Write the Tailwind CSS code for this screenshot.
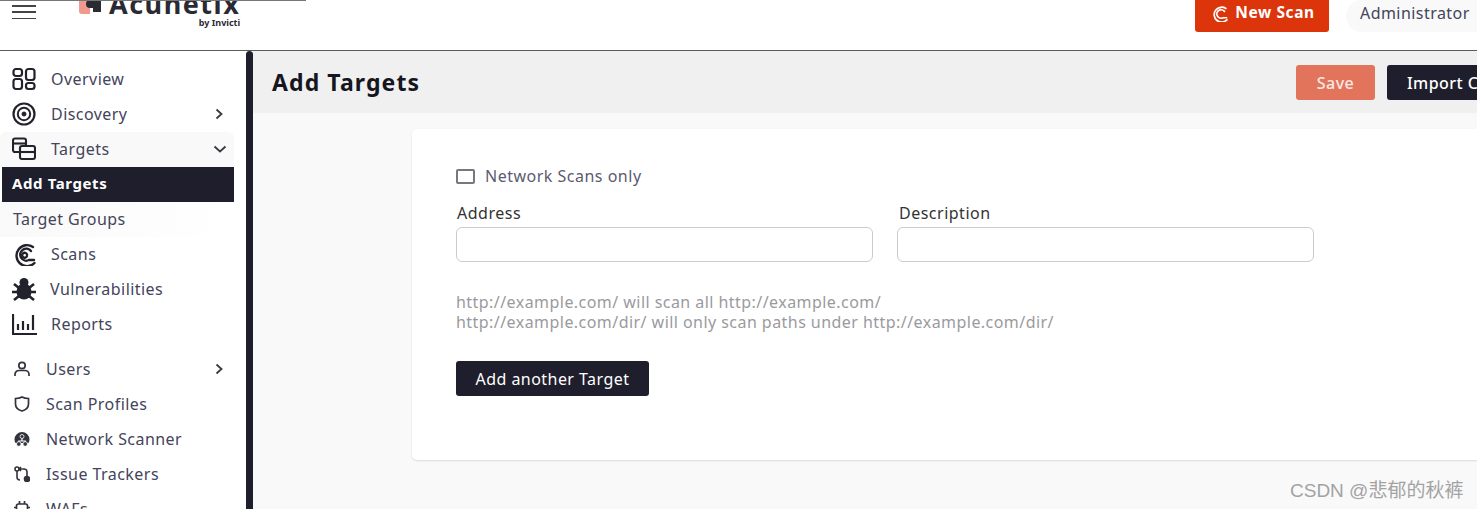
<!DOCTYPE html>
<html lang="en">
<head>
  <meta charset="UTF-8" />
  <meta name="viewport" content="width=device-width, initial-scale=1.0"/>
  <title>Add Targets</title>
  <script src="https://cdn.jsdelivr.net/npm/@tailwindcss/browser@4"></script>
</head>
<body class="bg-white font-['Noto_Sans',sans-serif] w-[1477px] h-[509px] overflow-hidden relative">
  <!-- Top bar -->
  <div class="h-[51px] border-b-[1.5px] border-[#5c5c5c] bg-white flex items-start overflow-hidden relative">
    <div class="absolute top-0 left-0 w-[306px] h-px bg-[#777]"></div>
    <button class="ml-[12px] mt-[5px] w-[24px] h-[14px] flex flex-col justify-between">
      <span class="block h-[1.5px] w-full bg-[#444]"></span>
      <span class="block h-[1.5px] w-full bg-[#444]"></span>
      <span class="block h-[1.5px] w-full bg-[#444]"></span>
    </button>
    <div class="ml-[42px] -mt-[13px] flex items-start">
      <svg class="w-[24px] h-[24px] mt-[5px]" viewBox="0 0 24 24">
        <path d="M1 5h11v17H4a3 3 0 0 1-3-3z" fill="#ef9a8c"/>
        <path d="M8 5h12a3 3 0 0 1 3 3v12h-8v-4h-3a4 4 0 0 1 0-8H8z" fill="#2b2b33"/>
      </svg>
      <div class="ml-[7px] flex flex-col items-end">
        <span class="text-[27px] leading-[33px] font-bold text-[#2a2a33] tracking-[1.5px]">Acunetix</span>
        <span class="text-[9px] leading-[10px] font-bold text-[#2a2a33] mt-[-2px]">by Invicti</span>
      </div>
    </div>
    <div class="ml-auto flex items-start">
      <a class="w-[134px] h-[32px] pb-[6px] pl-[2px] bg-[#dc340b] rounded-b-[3px] text-white font-bold text-[15.5px] tracking-[0.6px] flex items-center justify-center gap-[7px]">
        <svg class="w-[17px] h-[17px]" viewBox="0 0 24 24" fill="none" stroke="white" stroke-width="2.4" stroke-linecap="round">
          <path d="M21 5A10.500 10.500 0 1 0 22.500 21"/>
          <path d="M19 9A6 6 0 1 0 17 18L22 18"/>
        </svg>
        New Scan
      </a>
      <div class="ml-[17px] w-[131px] h-[32px] pb-[6px] bg-[#f9f9f9] rounded-l-full pl-[14px] flex items-center text-[16px] tracking-[0.45px] text-[#44445a] whitespace-nowrap">Administrator</div>
    </div>
  </div>

  <div class="flex h-[458px]">
    <!-- Sidebar -->
    <aside class="w-[246px] shrink-0 pt-[11px] text-[16px] tracking-[0.45px] text-[#44445a] overflow-hidden">
      <nav class="w-[234px]">
        <a class="h-[35px] pb-[2px] flex items-center pl-[12px]">
          <svg class="w-[24px] h-[24px] mr-[15px]" viewBox="0 0 24 24" fill="none" stroke="#22222c" stroke-width="2.2">
            <rect x="1.500" y="2" width="8.500" height="7" rx="2.500"/><rect x="14" y="2" width="8.500" height="11" rx="2.500"/>
            <rect x="1.500" y="12" width="8.500" height="10" rx="2.500"/><rect x="14" y="16" width="8.500" height="6" rx="2.500"/>
          </svg>Overview</a>
        <a class="h-[35px] pb-[2px] flex items-center pl-[12px]">
          <svg class="w-[24px] h-[24px] mr-[15px]" viewBox="0 0 24 24" fill="none" stroke="#22222c">
            <circle cx="12" cy="12" r="10.500" stroke-width="2.200"/><circle cx="12" cy="12" r="6.200" stroke-width="2"/><circle cx="12" cy="12" r="2" fill="#22222c" stroke-width="1"/>
          </svg>Discovery
          <svg class="w-[10px] h-[12px] ml-auto mr-[10px]" viewBox="0 0 10 12" fill="none" stroke="#3a3a44" stroke-width="1.800"><path d="M2.500 1.500 7.500 6l-5 4.500"/></svg></a>
        <a class="h-[35px] pb-[2px] flex items-center pl-[12px] bg-[#f9f9f9] rounded-t-[6px]">
          <svg class="w-[24px] h-[24px] mr-[15px]" viewBox="0 0 24 24" fill="none" stroke="#22222c" stroke-width="2.100">
            <path d="M7 15H3a2 2 0 0 1-2-2V3.500a2 2 0 0 1 2-2h9a2 2 0 0 1 2 2V8"/><path d="M1 6.500h13"/>
            <rect x="8" y="9" width="15" height="13" rx="2"/><path d="M8 15h15"/>
          </svg>Targets
          <svg class="w-[14px] h-[10px] ml-auto mr-[7px]" viewBox="0 0 14 10" fill="none" stroke="#3a3a44" stroke-width="1.800"><path d="M1.500 2.500 7 7.500l5.500-5"/></svg></a>
        <a class="h-[35px] pb-[2px] ml-[2px] flex items-center pl-[10px] bg-[#1e1e2c] text-white font-bold text-[15px] tracking-[0.6px]">Add Targets</a>
        <a class="h-[35px] pb-[2px] flex items-center pl-[13px] bg-gradient-to-r from-[#f9f9f9] to-white">Target Groups</a>
        <a class="h-[35px] pb-[2px] flex items-center pl-[12px]">
          <svg class="w-[24px] h-[24px] mr-[15px]" viewBox="0 0 24 24" fill="none" stroke="#22222c" stroke-width="2.400" stroke-linecap="round">
            <path d="M21 5A10.500 10.500 0 1 0 22.500 21"/>
            <path d="M19 9A6 6 0 1 0 17 18L22 18"/>
            <path d="M15 12.500A2.500 2.500 0 1 0 15 14"/>
          </svg>Scans</a>
        <a class="h-[35px] pb-[2px] flex items-center pl-[12px]">
          <svg class="w-[24px] h-[24px] mr-[14px]" viewBox="0 0 24 24" fill="#22222c" stroke="#22222c">
            <ellipse cx="12" cy="14.500" rx="7.500" ry="8" stroke="none"/><circle cx="12" cy="5.500" r="4.500" stroke="none"/>
            <path d="M2 7l5 4M22 7l-5 4M0 15h6M24 15h-6M2 23l5-4M22 23l-5-4" stroke-width="2.600" fill="none"/>
          </svg>Vulnerabilities</a>
        <a class="h-[35px] pb-[2px] flex items-center pl-[12px]">
          <svg class="w-[25px] h-[24px] mr-[14px]" viewBox="0 0 25 24" fill="none" stroke="#22222c" stroke-width="2.200">
            <path d="M1 2v20h24"/><path d="M6 18v-6M11 18v-9M16 18v-6M21 18V3"/>
          </svg>Reports</a>
        <a class="h-[35px] pb-[2px] mt-[10px] flex items-center pl-[14px]">
          <svg class="w-[16px] h-[16px] mr-[16px]" viewBox="0 0 16 16" fill="none" stroke="#33333d" stroke-width="1.700">
            <circle cx="8" cy="4.500" r="3.200"/><path d="M1 15v-1.500a4 4 0 0 1 4-4h6a4 4 0 0 1 4 4V15"/>
          </svg>Users
          <svg class="w-[10px] h-[12px] ml-auto mr-[10px]" viewBox="0 0 10 12" fill="none" stroke="#3a3a44" stroke-width="1.800"><path d="M2.500 1.500 7.500 6l-5 4.500"/></svg></a>
        <a class="h-[35px] pb-[2px] flex items-center pl-[14px]">
          <svg class="w-[16px] h-[16px] mr-[16px]" viewBox="0 0 16 16" fill="none" stroke="#33333d" stroke-width="1.700">
            <path d="M8 1c2 1.200 4 1.500 6.500 1.500V8c0 3.500-3 6-6.500 7C4.500 14 1.500 11.500 1.500 8V2.500C4 2.500 6 2.200 8 1z"/>
          </svg>Scan Profiles</a>
        <a class="h-[35px] pb-[2px] flex items-center pl-[14px]">
          <svg class="w-[16px] h-[16px] mr-[16px]" viewBox="0 0 16 16">
            <path d="M8 1A7.500 7.500 0 0 0 .5 8.500c0 1.300.3 2.500 1 3.500h13c.7-1 1-2.200 1-3.500A7.500 7.500 0 0 0 8 1z" fill="#33333d"/>
            <path d="M8 6v4M4.800 12.500V10h6.400v2.500" fill="none" stroke="white" stroke-width="1.200"/>
            <circle cx="8" cy="5.500" r="2" fill="#33333d" stroke="white" stroke-width=".8"/>
            <circle cx="4.800" cy="13" r="2.300" fill="#33333d" stroke="white" stroke-width=".8"/>
            <circle cx="11.200" cy="13" r="2.300" fill="#33333d" stroke="white" stroke-width=".8"/>
          </svg>Network Scanner</a>
        <a class="h-[35px] pb-[2px] flex items-center pl-[14px]">
          <svg class="w-[16px] h-[16px] mr-[16px]" viewBox="0 0 16 16" fill="none" stroke="#33333d" stroke-width="1.600">
            <circle cx="3" cy="3" r="2"/><path d="M3 5v6a3 3 0 0 0 3 3"/><path d="M7 1 5 3l2 2M5.500 3H10a3 3 0 0 1 3 3v5"/><circle cx="13" cy="13" r="2.500" fill="#33333d"/>
          </svg>Issue Trackers</a>
        <a class="h-[35px] pb-[2px] flex items-center pl-[14px]">
          <svg class="w-[16px] h-[16px] mr-[16px]" viewBox="0 0 16 16" fill="none" stroke="#33333d" stroke-width="1.700">
            <rect x="2.500" y="3" width="11" height="11" rx="2"/><path d="M5.500 3V0M10.500 3V0M0 6.500h2.500M13.500 6.500H16"/>
          </svg>WAFs</a>
      </nav>
    </aside>
    <div class="w-[7px] shrink-0 bg-[#1e1e2c] rounded-t-[4px]"></div>

    <!-- Main -->
    <main class="flex-1 min-w-0 bg-[#f9f9f9] overflow-hidden">
      <div class="h-[62px] bg-[#f0f0f0] flex items-center pl-[19px] pt-[1px]">
        <h1 class="text-[23px] font-bold tracking-[1.1px] text-[#16161e]">Add Targets</h1>
        <button class="ml-auto w-[79px] h-[35px] rounded-[3px] bg-[#e3745c] text-[#fbe9e4] text-[16px] tracking-[0.45px] font-medium">Save</button>
        <button class="ml-[12px] -mr-[50px] w-[140px] h-[35px] rounded-[3px] bg-[#1e1e2c] text-white text-[16px] tracking-[0.45px] font-medium text-left pl-[20px] whitespace-nowrap">Import CSV</button>
      </div>
      <div class="ml-[159px] mt-[16px] h-[331px] -mr-[20px] bg-white rounded-[5px] shadow-[0_1px_2px_rgba(0,0,0,0.12)] pl-[44px] pt-[38px]">
        <label class="flex items-center h-[18px] text-[16px] tracking-[0.5px] text-[#5a5a70]">
          <span class="w-[19px] h-[15px] border-2 border-[#77777f] rounded-[2px] mr-[10px]"></span>
          Network Scans only
        </label>
        <div class="flex gap-[24px] mt-[18px]">
          <div class="w-[417px]">
            <div class="text-[16px] leading-[20px] text-[#333] pl-px tracking-[0.5px]">Address</div>
            <input class="block mt-[4px] w-full h-[35px] bg-white border border-[#ccc] rounded-[6px]" />
          </div>
          <div class="w-[417px]">
            <div class="text-[16px] leading-[20px] text-[#333] pl-[2px] tracking-[0.5px]">Description</div>
            <input class="block mt-[4px] w-full h-[35px] bg-white border border-[#ccc] rounded-[6px]" />
          </div>
        </div>
        <p class="mt-[31px] text-[16px] leading-[19.500px] tracking-[0.45px] text-[#9a9a9e] whitespace-nowrap">http://example.com/ will scan all http://example.com/<br>http://example.com/dir/ will only scan paths under http://example.com/dir/</p>
        <button class="mt-[29px] w-[193px] h-[35px] rounded-[3px] bg-[#1e1e2c] text-white text-[16px] tracking-[0.45px]">Add another Target</button>
      </div>
    </main>
  </div>

  <!-- Watermark -->
  <div class="absolute left-[1290px] top-[479px] text-[19px] leading-[24px] text-[#a3a3a3] font-['Liberation_Sans','Noto_Sans_CJK_SC',sans-serif] whitespace-nowrap">CSDN @悲郁的秋裤</div>
</body>
</html>
